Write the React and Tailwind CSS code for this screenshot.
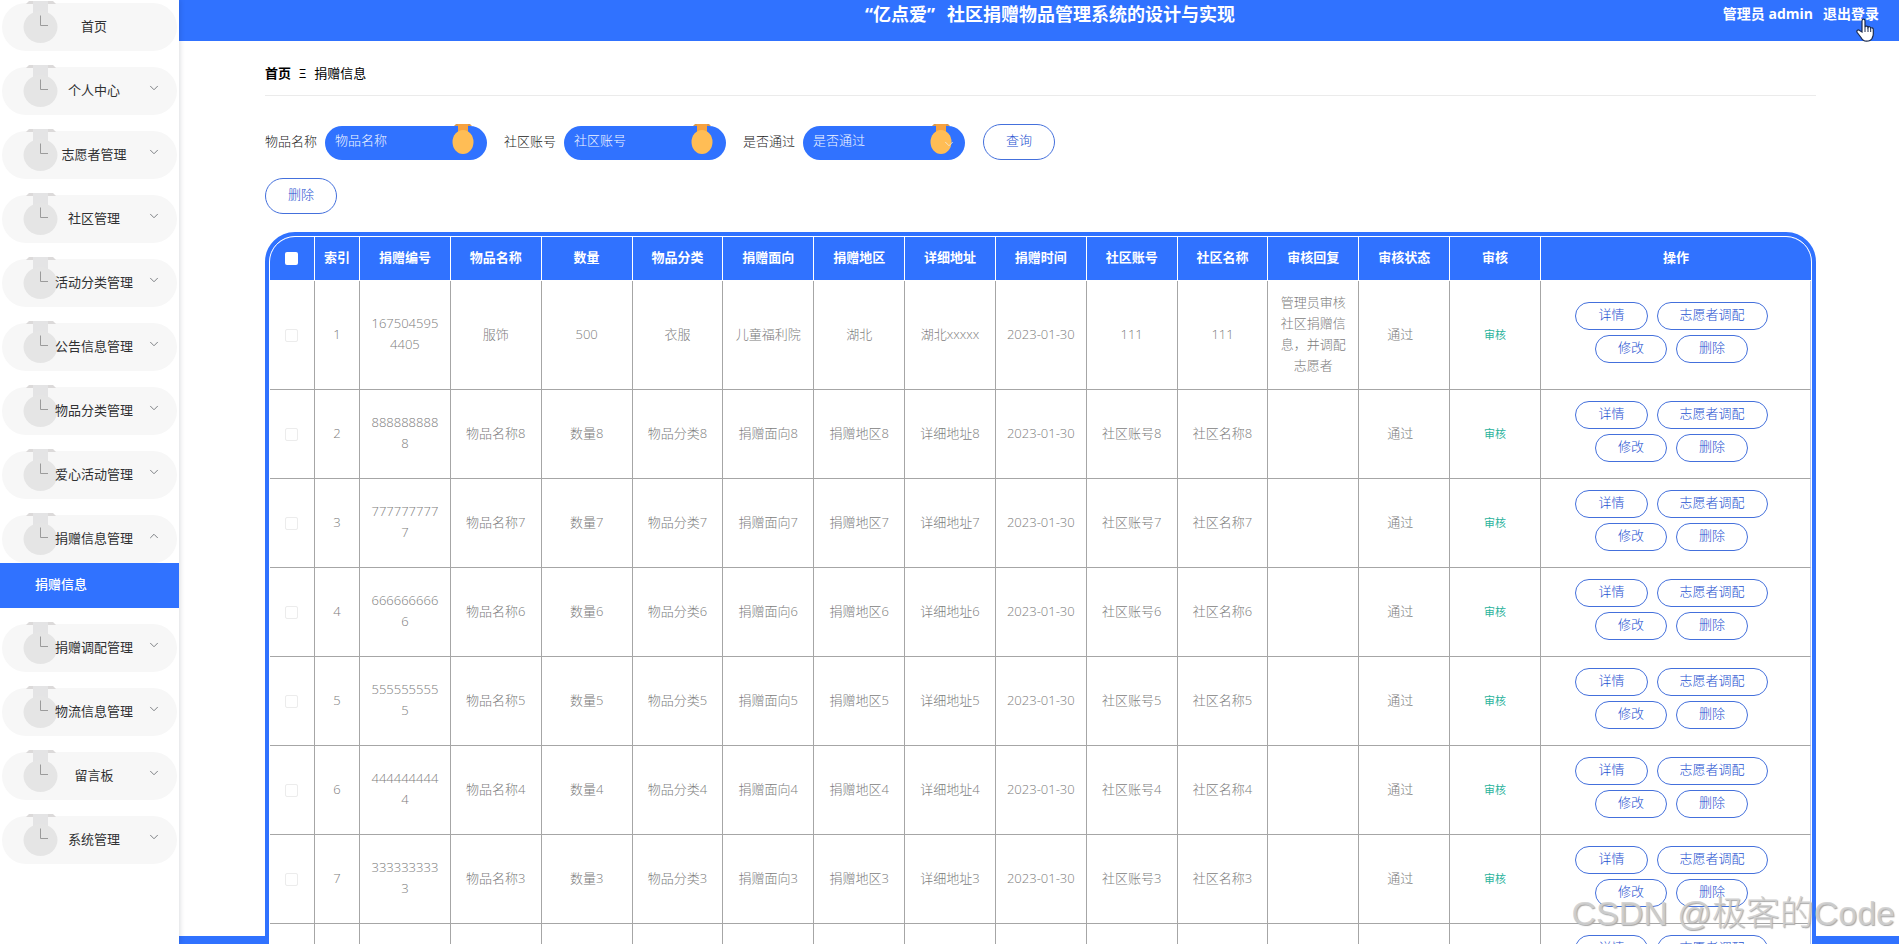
import React, { useState } from "react";
import { ChevronDown, ChevronUp } from "lucide-react";


// ---------------------------------------------
// Static data
// ---------------------------------------------
const menus = [
  { name: "首页" },
  { name: "个人中心", children: ["修改密码", "个人信息"] },
  { name: "志愿者管理", children: ["志愿者"] },
  { name: "社区管理", children: ["社区"] },
  { name: "活动分类管理", children: ["活动分类"] },
  { name: "公告信息管理", children: ["公告信息"] },
  { name: "物品分类管理", children: ["物品分类"] },
  { name: "爱心活动管理", children: ["爱心活动"] },
  { name: "捐赠信息管理", children: ["捐赠信息"] },
  { name: "捐赠调配管理", children: ["捐赠调配"] },
  { name: "物流信息管理", children: ["物流信息"] },
  { name: "留言板", children: ["留言板管理"] },
  { name: "系统管理", children: ["轮播图管理"] },
];

const columns = [
  "捐赠编号",
  "物品名称",
  "数量",
  "物品分类",
  "捐赠面向",
  "捐赠地区",
  "详细地址",
  "捐赠时间",
  "社区账号",
  "社区名称",
  "审核回复",
];

const rows = [
  [
    "1675045954405",
    "服饰",
    "500",
    "衣服",
    "儿童福利院",
    "湖北",
    "湖北xxxxx",
    "2023-01-30",
    "111",
    "111",
    "管理员审核社区捐赠信息，并调配志愿者",
  ],
  ...[8, 7, 6, 5, 4, 3, 2].map((n) => [
    String(n).repeat(10),
    `物品名称${n}`,
    `数量${n}`,
    `物品分类${n}`,
    `捐赠面向${n}`,
    `捐赠地区${n}`,
    `详细地址${n}`,
    "2023-01-30",
    `社区账号${n}`,
    `社区名称${n}`,
    "",
  ]),
];

const actions = ["详情", "志愿者调配", "修改", "删除"];


// ---------------------------------------------
// Medal drawings
// ---------------------------------------------
const GreyMedal = () => (
  <svg className="absolute left-[21px] -top-[2px]" width="36" height="44" viewBox="0 0 36 44">
    <path d="M6 0H30L33 3H3Z" fill="#dcdada" />
    <rect x="10" y="0" width="15" height="13" fill="#e4e4e5" />
    <ellipse cx="17.5" cy="26" rx="17" ry="16" fill="#e5e5e5" />
    <path d="M17.5 14.500V24.500H25" fill="none" stroke="#9b9b9b" />
  </svg>
);

const GoldMedal = () => (
  <svg
    className="pointer-events-none absolute right-[13px] -top-px"
    width="22"
    height="31"
    viewBox="0 0 22 31"
  >
    <path d="M4 0H18L20 2H2Z" fill="#d99a50" />
    <rect x="6" y="0" width="10" height="9" fill="#f7a23f" />
    <ellipse cx="11" cy="18" rx="10.500" ry="12" fill="#ffbd55" />
  </svg>
);


// ---------------------------------------------
// Sidebar
// ---------------------------------------------
const Sidebar = () => {
  const [open, setOpen] = useState("捐赠信息管理");

  return (
    <nav className="relative z-10 w-[179px] shrink-0 bg-white pt-[3px] shadow-[1px_0_5px_rgba(0,21,41,0.15)]">
      <ul className="flex flex-col gap-4">
        {menus.map((menu) => (
          <li key={menu.name}>
            <button
              onClick={() => setOpen(open === menu.name ? "" : menu.name)}
              className="relative mx-[2px] flex h-12 w-[175px] items-center justify-center rounded-full bg-[#f7f7f7] pb-[3px] pl-[9px] text-[#303133]"
            >
              <GreyMedal />
              <span className="relative">{menu.name}</span>
              {menu.children && (
                <span className="absolute right-[16px] top-[14px] text-[#6d7075]">
                  {open === menu.name ? (
                    <ChevronUp size={14} strokeWidth={1.5} />
                  ) : (
                    <ChevronDown size={14} strokeWidth={1.5} />
                  )}
                </span>
              )}
            </button>
            {menu.children && open === menu.name &&
              menu.children.map((child) => (
                <a
                  key={child}
                  href="#"
                  className="flex h-[45px] items-center bg-[#3072ff] pb-[3px] pl-[35px] font-medium text-white"
                >
                  {child}
                </a>
              ))}
          </li>
        ))}
      </ul>
    </nav>
  );
};


// ---------------------------------------------
// Header
// ---------------------------------------------
const Header = () => (
  <header className="flex h-[41px] shrink-0 items-center bg-[#3072ff] pb-[13px] pl-[42px] pr-5 font-bold text-white">
    <div className="flex-1" />
    <h1 className="flex gap-3 text-lg leading-6">
      <span>“亿点爱”</span>
      <span>社区捐赠物品管理系统的设计与实现</span>
    </h1>
    <div className="flex flex-1 justify-end gap-[10px] text-sm">
      <span>管理员 admin</span>
      <a href="#" className="relative">
        退出登录
        {/* hand pointer */}
        <svg
          className="absolute left-[33px] top-[14px]"
          width="18"
          height="24"
          viewBox="0 0 18 24"
        >
          <path
            d="M6 14V3C6 .6 9 .6 9 3V9C9.500 7.500 11.700 7.800 12 9.500C12.700 8.200 14.700 8.600 14.700 10.200C15.500 9.300 17.300 9.800 17.300 11.500V16C17.300 18 16.500 19 16 20.500C15 22.500 13 23.200 10.500 23.200C7.500 23.200 6 21.500 5 19.500L1.200 14.500C0 12.500 2.200 11.300 3.600 12.500Z"
            fill="#fff"
            stroke="#1c2b4d"
            strokeWidth="1.200"
          />
          <path d="M9 9V14M12 9.500V14M14.700 10.500V14" stroke="#1c2b4d" fill="none" />
        </svg>
      </a>
    </div>
  </header>
);


// ---------------------------------------------
// Search form
// ---------------------------------------------
const fieldClass =
  "block h-[34px] w-[162px] appearance-none rounded-full bg-[#3072ff] pl-[10px] pr-10 pb-[5px] font-light text-[#f2f6ff] outline-none placeholder:text-[#f2f6ff]";

const pillButton =
  "h-9 rounded-full border border-[#4470dc] px-[22px] pb-1 font-light text-[#2450d0]";

const SearchForm = () => (
  <form
    className="flex items-center font-light text-[#222222]"
    onSubmit={(e) => e.preventDefault()}
  >
    <label htmlFor="goods" className="mr-2 pb-[3px]">物品名称</label>
    <div className="relative mr-[17px] pt-px">
      <input id="goods" placeholder="物品名称" className={fieldClass} />
      <GoldMedal />
    </div>

    <label htmlFor="account" className="mr-2 pb-[3px]">社区账号</label>
    <div className="relative mr-[17px] pt-px">
      <input id="account" placeholder="社区账号" className={fieldClass} />
      <GoldMedal />
    </div>

    <label htmlFor="passed" className="mr-2 pb-[3px]">是否通过</label>
    <div className="relative mr-[18px] pt-px">
      <select id="passed" className={fieldClass} defaultValue="">
        <option value="">是否通过</option>
        <option value="是">是</option>
        <option value="否">否</option>
      </select>
      <GoldMedal />
      <ChevronDown
        size={14}
        strokeWidth={1.5}
        className="pointer-events-none absolute right-[9px] top-3 text-[#efe6d8]"
      />
    </div>

    <button className={pillButton}>查询</button>
  </form>
);


// ---------------------------------------------
// Donation table
// ---------------------------------------------
const DonationTable = () => (
  <div className="relative rounded-[30px] border-4 border-[#3072ff] bg-[#3072ff]">
    <div className="overflow-hidden rounded-[26px] border border-white bg-white">
      <table className="w-full table-fixed border-separate border-spacing-0 text-center">
        <thead>
          <tr className="h-11 bg-[#3072ff] text-white">
            <th className="w-[45px] border-b border-r border-white pr-[2px]">
              <input
                type="checkbox"
                aria-label="全选"
                className="block mx-auto size-[13px] appearance-none rounded-xs bg-white"
              />
            </th>
            <th className="w-[45px] border-b border-r border-white pb-1">索引</th>
            {columns.map((col) => (
              <th key={col} className="border-b border-r border-white pb-1">{col}</th>
            ))}
            <th className="border-b border-r border-white pb-1">审核状态</th>
            <th className="border-b border-r border-white pb-1">审核</th>
            <th className="w-[270px] border-b border-white pb-1">操作</th>
          </tr>
        </thead>
        <tbody className="font-light leading-[21px] text-[#7c7c7c]">
          {rows.map((row, i) => (
            <tr key={row[0]}>
              <td className="border-b border-r border-[#a6a6a6] pr-[2px]">
                <input
                  type="checkbox"
                  aria-label={`选择第${i + 1}行`}
                  className="block mx-auto size-[13px] appearance-none rounded-xs border border-[#ececec] bg-white"
                />
              </td>
              <td className="border-b border-r border-[#a6a6a6] pb-[2px]">{i + 1}</td>
              {row.map((cell, j) => (
                <td
                  key={columns[j]}
                  className="break-all border-b border-r border-[#a6a6a6] px-[9px] pb-[13px] pt-[11px]"
                >
                  {cell}
                </td>
              ))}
              <td className="border-b border-r border-[#a6a6a6] pb-[2px] pr-2">通过</td>
              <td className="border-b border-r border-[#a6a6a6] pb-[2px]">
                <button className="text-[11px] font-normal text-[#2bb39c]">审核</button>
              </td>
              <td className="border-b border-r border-b-[#a6a6a6] border-r-[#b9c8ee] py-[11px] pl-px">
                <div className="flex flex-wrap justify-center">
                  {actions.map((action) => (
                    <button
                      key={action}
                      className="mb-[5px] mr-[9px] h-7 rounded-full border border-[#4470dc] px-[22px] pb-1 leading-5 text-[#2450d0]"
                    >
                      {action}
                    </button>
                  ))}
                </div>
              </td>
            </tr>
          ))}
        </tbody>
      </table>
    </div>
  </div>
);


// ---------------------------------------------
// Page
// ---------------------------------------------
const App = () => {
  return (
    <div className="relative flex h-screen overflow-hidden bg-white font-['Open_Sans','Noto_Sans_CJK_SC',sans-serif] text-[13px] leading-5">
      <Sidebar />

      <div className="flex min-w-0 flex-1 flex-col">
        <Header />

        <main className="min-h-0 flex-1 pl-[86px] pr-[83px] pt-[22px]">
          <div className="flex gap-2 border-b border-[#ebebeb] pb-3 text-black">
            <a href="#" className="font-bold">首页</a>
            <span>Ξ</span>
            <span>捐赠信息</span>
          </div>

          <div className="pt-7">
            <SearchForm />
          </div>
          <div className="pb-[18px] pt-[18px]">
            <button className={`${pillButton} block`}>删除</button>
          </div>

          <DonationTable />
        </main>

        <footer className="h-2 shrink-0 bg-[#3072ff]" />
      </div>

      {/* watermark */}
      <div className="pointer-events-none absolute bottom-[10px] right-1 z-20 whitespace-nowrap font-['Liberation_Sans','Noto_Sans_CJK_SC',sans-serif] text-[34px] font-light leading-[42px] text-[#d0d0d0]/90 [text-shadow:1px_1px_1px_#a8a8a8]">
        CSDN @极客的Code
      </div>
    </div>
  );
};

export default App;
